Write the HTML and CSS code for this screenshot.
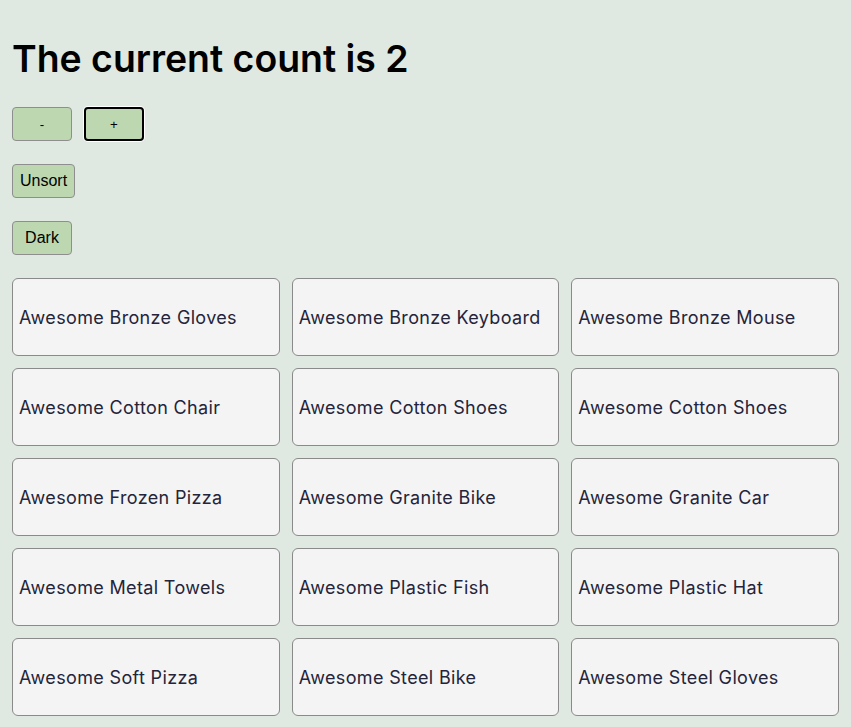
FILE: index.html
```html
<!DOCTYPE html>
<html>
<head>
<meta charset="utf-8">
<link rel="stylesheet" href="styles.css">
</head>
<body>
<div class="app">
  <h1 class="title">The current count is 2</h1>
  <div class="counter">
    <button class="btn small">-</button>
    <button class="btn small focused">+</button>
  </div>
  <div class="row"><button class="btn">Unsort</button></div>
  <div class="row"><button class="btn">Dark</button></div>
  <div class="grid">
    <div class="card">Awesome Bronze Gloves</div>
    <div class="card">Awesome Bronze Keyboard</div>
    <div class="card">Awesome Bronze Mouse</div>
    <div class="card">Awesome Cotton Chair</div>
    <div class="card">Awesome Cotton Shoes</div>
    <div class="card">Awesome Cotton Shoes</div>
    <div class="card">Awesome Frozen Pizza</div>
    <div class="card">Awesome Granite Bike</div>
    <div class="card">Awesome Granite Car</div>
    <div class="card">Awesome Metal Towels</div>
    <div class="card">Awesome Plastic Fish</div>
    <div class="card">Awesome Plastic Hat</div>
    <div class="card">Awesome Soft Pizza</div>
    <div class="card">Awesome Steel Bike</div>
    <div class="card">Awesome Steel Gloves</div>
  </div>
</div>
</body>
</html>
```
FILE: styles.css
```css
html, body {
  margin: 0;
  padding: 0;
  background: #e0e9e1;
}
.app {
  padding: 0 12px 12px 12px;
  font-family: Inter, "Noto Sans", sans-serif;
  display: flex;
  flex-direction: column;
  gap: 23px;
}
.title {
  margin: 0;
  padding-top: 34px;
  font-size: 37.4px;
  line-height: 50px;
  font-weight: 600;
  color: #000;
}
.counter {
  display: flex;
  gap: 12px;
}
.row {
  display: flex;
}
.btn {
  height: 34px;
  min-width: 60px;
  padding: 0 7px;
  background: #bdd8b0;
  border: 1px solid #8e8e8e;
  border-radius: 4px;
  font-family: "Liberation Sans", Arial, sans-serif;
  font-size: 16px;
  color: #000;
}
.btn.small {
  font-size: 13.33px;
}
.btn.focused {
  border: 2px solid #000;
  box-shadow: 0 0 0 1px #fff;
}
.grid {
  display: grid;
  grid-template-columns: repeat(3, 1fr);
  gap: 12px;
}
.card {
  height: 78px;
  box-sizing: border-box;
  display: flex;
  align-items: center;
  padding: 0 6px;
  background: #f4f4f4;
  border: 1px solid #8a8a8a;
  border-radius: 6px;
  font-size: 18px;
  letter-spacing: 0.35px;
  color: #24243a;
}
```
